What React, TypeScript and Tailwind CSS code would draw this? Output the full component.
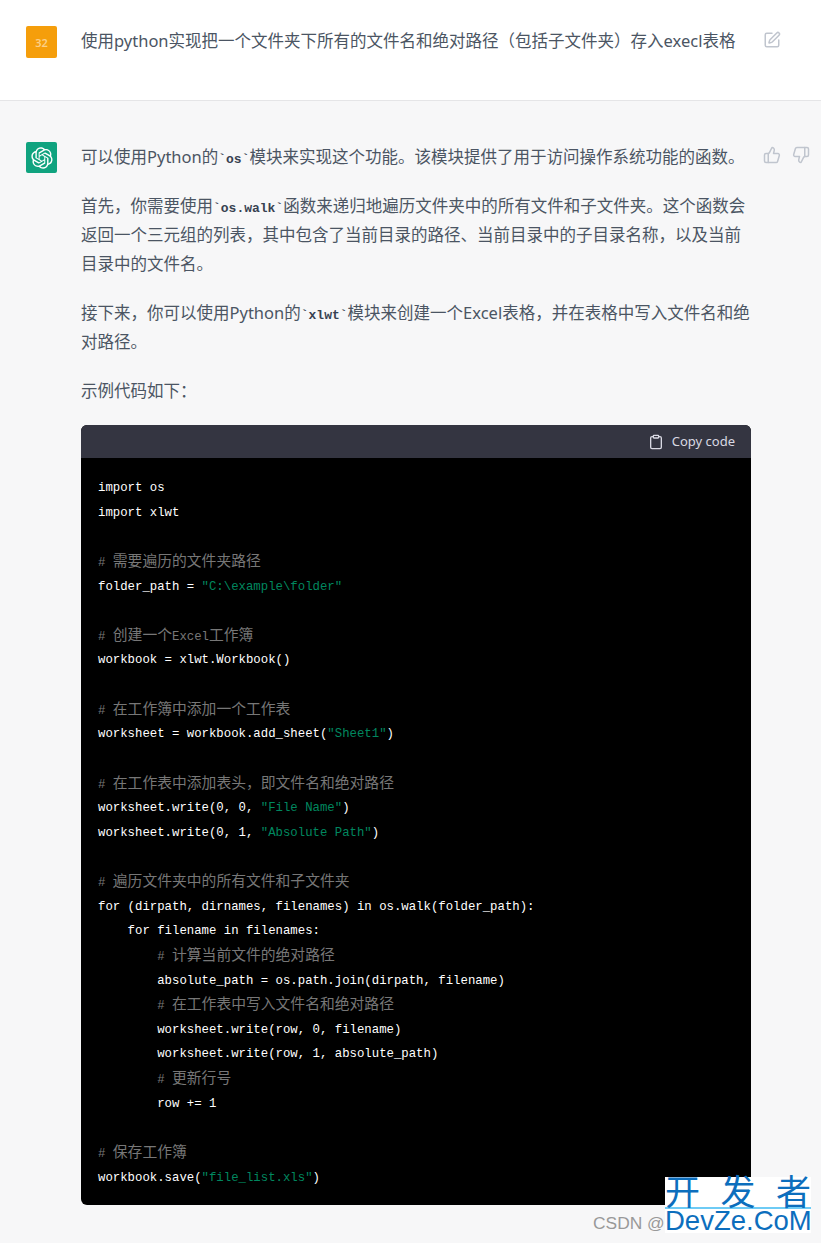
import { Clipboard, SquarePen, ThumbsDown, ThumbsUp } from 'lucide-react';

const codeLines = [
  'import os',
  'import xlwt',
  '',
  '# 需要遍历的文件夹路径',
  'folder_path = "C:\\example\\folder"',
  '',
  '# 创建一个Excel工作簿',
  'workbook = xlwt.Workbook()',
  '',
  '# 在工作簿中添加一个工作表',
  'worksheet = workbook.add_sheet("Sheet1")',
  '',
  '# 在工作表中添加表头，即文件名和绝对路径',
  'worksheet.write(0, 0, "File Name")',
  'worksheet.write(0, 1, "Absolute Path")',
  '',
  '# 遍历文件夹中的所有文件和子文件夹',
  'for (dirpath, dirnames, filenames) in os.walk(folder_path):',
  '    for filename in filenames:',
  '        # 计算当前文件的绝对路径',
  '        absolute_path = os.path.join(dirpath, filename)',
  '        # 在工作表中写入文件名和绝对路径',
  '        worksheet.write(row, 0, filename)',
  '        worksheet.write(row, 1, absolute_path)',
  '        # 更新行号',
  '        row += 1',
  '',
  '# 保存工作簿',
  'workbook.save("file_list.xls")',
];

// CJK glyphs are double width in the block, so they get a bigger size than the latin
function MonoText({ text }: { text: string }) {
  return (
    <>
      {text.split(/([\u3000-\u9fff\uff00-\uffef]+)/).map((part, i) =>
        i % 2 === 1 ? (
          <span key={i} className="text-[14.8px]">
            {part}
          </span>
        ) : (
          <span key={i}>{part}</span>
        ),
      )}
    </>
  );
}

function CodeLine({ line }: { line: string }) {
  if (line.trim().startsWith('#')) {
    return (
      <div className="h-[24.64px] text-[#777777]">
        <MonoText text={line} />
      </div>
    );
  }
  return (
    <div className="h-[24.64px] text-white">
      {line.split(/("[^"]*")/).map((part, i) =>
        i % 2 === 1 ? (
          <span key={i} className="text-[#00875f]">
            {part}
          </span>
        ) : (
          <span key={i}>{part}</span>
        ),
      )}
    </div>
  );
}

function InlineCode({ children }: { children: string }) {
  return (
    <code className="font-['Liberation_Mono',monospace] text-[13px] leading-none font-bold text-[#374151]">
      `{children}`
    </code>
  );
}

function OpenAILogo() {
  return (
    <svg width="22" height="22" viewBox="0 0 41 41" fill="currentColor" className="text-white">
      <path d="M37.5324 16.8707C37.9808 15.5241 38.1363 14.0974 37.9886 12.6859C37.8409 11.2744 37.3934 9.91076 36.676 8.68622C35.6126 6.83404 33.9882 5.3676 32.0373 4.4985C30.0864 3.62941 27.9098 3.40259 25.8215 3.85078C24.8796 2.7893 23.7219 1.94125 22.4257 1.36341C21.1295 0.785575 19.7249 0.491269 18.3058 0.500197C16.1708 0.495044 14.0893 1.16803 12.3614 2.42214C10.6335 3.67624 9.34853 5.44666 8.6917 7.47815C7.30085 7.76286 5.98686 8.3414 4.8377 9.17505C3.68854 10.0087 2.73073 11.0782 2.02839 12.312C0.956464 14.1591 0.498905 16.2988 0.721698 18.4228C0.944492 20.5467 1.83612 22.5449 3.268 24.1293C2.81966 25.4759 2.66413 26.9026 2.81182 28.3141C2.95951 29.7256 3.40701 31.0892 4.12437 32.3138C5.18791 34.1659 6.8123 35.6322 8.76321 36.5013C10.7141 37.3704 12.8907 37.5973 14.9789 37.1492C15.9208 38.2107 17.0786 39.0587 18.3747 39.6366C19.6709 40.2144 21.0755 40.5087 22.4946 40.4998C24.6307 40.5054 26.7133 39.8321 28.4418 38.5772C30.1704 37.3223 31.4556 35.5506 32.1119 33.5179C33.5027 33.2332 34.8167 32.6547 35.9659 31.821C37.115 30.9874 38.0728 29.9178 38.7752 28.684C39.8458 26.8371 40.3023 24.6979 40.0789 22.5748C39.8556 20.4517 38.9639 18.4544 37.5324 16.8707ZM22.4978 37.8849C20.7443 37.8874 19.0459 37.2733 17.6994 36.1501C17.7601 36.117 17.8666 36.0586 17.936 36.0161L25.9004 31.4156C26.1003 31.3019 26.2663 31.137 26.3813 30.9378C26.4964 30.7386 26.5563 30.5124 26.5549 30.2825V19.0542L29.9213 20.998C29.9389 21.0068 29.9541 21.0198 29.9656 21.0359C29.977 21.052 29.9842 21.0707 29.9867 21.0902V30.3889C29.9842 32.375 29.1946 34.2791 27.7909 35.6841C26.3872 37.0892 24.4838 37.8806 22.4978 37.8849ZM6.39227 31.0064C5.51397 29.4888 5.19742 27.7107 5.49804 25.9832C5.55718 26.0187 5.66048 26.0818 5.73461 26.1244L13.699 30.7248C13.8975 30.8408 14.1233 30.902 14.3532 30.902C14.583 30.902 14.8088 30.8408 15.0073 30.7248L24.731 25.1103V28.9979C24.7321 29.0177 24.7283 29.0376 24.7199 29.0556C24.7115 29.0736 24.6988 29.0893 24.6829 29.1012L16.6317 33.7497C14.9096 34.7416 12.8643 35.0097 10.9447 34.4954C9.02506 33.9811 7.38785 32.7263 6.39227 31.0064ZM4.29707 13.6194C5.17156 12.0998 6.55279 10.9364 8.19885 10.3327C8.19885 10.4013 8.19491 10.5228 8.19491 10.6071V19.808C8.19351 20.0378 8.25334 20.2638 8.36823 20.4629C8.48312 20.6619 8.64893 20.8267 8.84863 20.9404L18.5723 26.5542L15.206 28.4979C15.1894 28.5089 15.1703 28.5155 15.1505 28.5173C15.1307 28.5191 15.1107 28.516 15.0924 28.5082L7.04046 23.8557C5.32135 22.8601 4.06716 21.2235 3.55289 19.3046C3.03862 17.3858 3.30624 15.3413 4.29707 13.6194ZM31.955 20.0556L22.2312 14.4411L25.5976 12.4981C25.6142 12.4872 25.6333 12.4805 25.6531 12.4787C25.6729 12.4769 25.6928 12.4801 25.7111 12.4879L33.7631 17.1364C34.9967 17.849 36.0017 18.8982 36.6606 20.1613C37.3194 21.4244 37.6047 22.849 37.4832 24.2684C37.3617 25.6878 36.8382 27.0432 35.9743 28.1759C35.1103 29.3086 33.9415 30.1717 32.6047 30.6641C32.6047 30.5947 32.6047 30.4733 32.6047 30.3889V21.188C32.6066 20.9586 32.5474 20.7328 32.4332 20.5338C32.319 20.3348 32.154 20.1698 31.955 20.0556ZM35.3055 15.0128C35.2464 14.9765 35.1431 14.9142 35.069 14.8717L27.1045 10.2712C26.906 10.1554 26.6803 10.0943 26.4504 10.0943C26.2206 10.0943 25.9948 10.1554 25.7963 10.2712L16.0726 15.8858V11.9982C16.0715 11.9783 16.0753 11.9585 16.0837 11.9405C16.0921 11.9225 16.1048 11.9068 16.1207 11.8949L24.1719 7.25025C25.4053 6.53903 26.8158 6.19376 28.2383 6.25482C29.6608 6.31589 31.0364 6.78077 32.2044 7.59508C33.3723 8.40939 34.2842 9.53945 34.8334 10.8531C35.3826 12.1667 35.5464 13.6095 35.3055 15.0128ZM14.2424 21.9419L10.8752 19.9981C10.8576 19.9893 10.8423 19.9763 10.8309 19.9602C10.8195 19.9441 10.8122 19.9254 10.8098 19.9058V10.6071C10.8107 9.18295 11.2173 7.78848 11.9819 6.58696C12.7466 5.38544 13.8377 4.42659 15.1275 3.82264C16.4173 3.21869 17.8524 2.99464 19.2649 3.1767C20.6775 3.35876 22.0089 3.93941 23.1034 4.85067C23.0427 4.88379 22.937 4.94215 22.8668 4.98473L14.9024 9.58517C14.7025 9.69878 14.5366 9.86356 14.4215 10.0626C14.3065 10.2616 14.2466 10.4877 14.2479 10.7175L14.2424 21.9419ZM16.071 17.9991L20.4018 15.4978L24.7325 17.9975V22.9985L20.4018 25.4983L16.071 22.9985V17.9991Z" />
    </svg>
  );
}

export default function App() {
  return (
    <div className="relative h-[1243px] overflow-hidden bg-[#f7f7f8] font-['Noto_Sans','Noto_Sans_CJK_SC',sans-serif] text-[16.5px] leading-[29px] text-[#4b5563]">
      <section className="flex h-[101px] items-start border-b border-[#e5e5e7] bg-white pl-[26px] pt-[26px]">
        <div className="flex h-[32px] w-[31px] shrink-0 items-center justify-center rounded-[2px] bg-[#f59e0b] text-[11px] font-semibold text-[#fcd088]">
          32
        </div>
        <p className="ml-[24px] w-[670px] shrink-0">
          使用python实现把一个文件夹下所有的文件名和绝对路径（包括子文件夹）存入execl表格
        </p>
        <SquarePen className="ml-[12px] mt-[5px] h-[18px] w-[18px] text-[#c0c5ce]" />
      </section>

      <section className="flex items-start pl-[26px] pt-[41px]">
        <div className="flex h-[31px] w-[31px] shrink-0 items-center justify-center rounded-[2px] bg-[#10a37f]">
          <OpenAILogo />
        </div>
        <div className="ml-[24px] flex w-[670px] shrink-0 flex-col gap-[20px]">
          <p>
            可以使用Python的<InlineCode>os</InlineCode>模块来实现这个功能。该模块提供了用于访问操作系统功能的函数。
          </p>
          <p>
            首先，你需要使用<InlineCode>os.walk</InlineCode>函数来递归地遍历文件夹中的所有文件和子文件夹。这个函数会返回一个三元组的列表，其中包含了当前目录的路径、当前目录中的子目录名称，以及当前目录中的文件名。
          </p>
          <p>
            接下来，你可以使用Python的<InlineCode>xlwt</InlineCode>模块来创建一个Excel表格，并在表格中写入文件名和绝对路径。
          </p>
          <p>示例代码如下：</p>
          <div className="overflow-hidden rounded-[6px] bg-black">
            <div className="flex h-[33px] items-center justify-end gap-[8px] bg-[#343541] pr-[16px] text-[13px] text-[#d9d9e3]">
              <Clipboard className="h-[16px] w-[16px]" />
              <span>Copy code</span>
            </div>
            <div className="whitespace-pre px-[17px] pb-[15px] pt-[18px] font-['Liberation_Mono','Noto_Sans_CJK_SC',monospace] text-[12.33px] leading-[24.64px]">
              {codeLines.map((line, i) => (
                <CodeLine key={i} line={line} />
              ))}
            </div>
          </div>
        </div>
        <div className="ml-[12px] mt-[4px] flex gap-[11px] text-[#c0c5ce]">
          <ThumbsUp className="h-[18px] w-[18px]" />
          <ThumbsDown className="h-[18px] w-[18px]" />
        </div>
      </section>

      <div className="absolute left-[593px] top-[1212px] font-['Liberation_Sans',sans-serif] text-[17.4px] leading-[22px] text-[#999999]">
        CSDN @
      </div>
      <div className="absolute left-[665px] top-[1177px] h-[56px] w-[146px] bg-white text-[#0c6ebd]">
        <div className="flex h-[32px] justify-between border-b-2 border-[#6ecbf5] text-[35px] leading-[30px]">
          <span>开</span>
          <span>发</span>
          <span>者</span>
        </div>
        <div className="font-['Liberation_Sans',sans-serif] text-[27.5px] leading-[24px]">DevZe.CoM</div>
      </div>
    </div>
  );
}
